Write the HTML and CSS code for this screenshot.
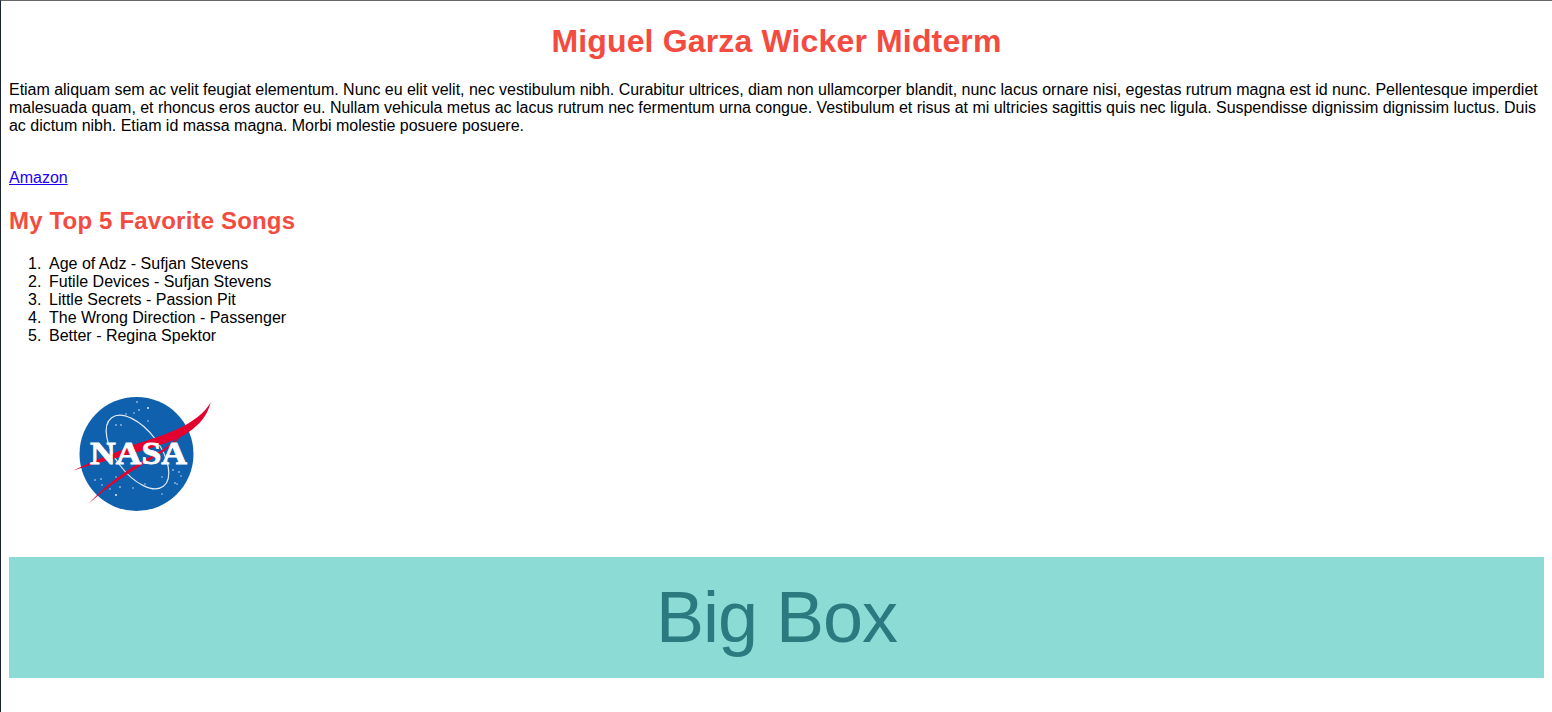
FILE: index.html
```html
<!DOCTYPE html>
<html lang="en">
<head>
    <meta charset="UTF-8">
    <title>Miguel Garza Wicker Midterm</title>
    <link rel="stylesheet" href="styles.css">
</head>
<body>
    <h1 class="title">Miguel Garza Wicker Midterm</h1>
    <p class="intro">Etiam aliquam sem ac velit feugiat elementum. Nunc eu elit velit, nec vestibulum nibh. Curabitur ultrices, diam non ullamcorper blandit, nunc lacus ornare nisi, egestas rutrum magna est id nunc. Pellentesque imperdiet malesuada quam, et rhoncus eros auctor eu. Nullam vehicula metus ac lacus rutrum nec fermentum urna congue. Vestibulum et risus at mi ultricies sagittis quis nec ligula. Suspendisse dignissim dignissim luctus. Duis ac dictum nibh. Etiam id massa magna. Morbi molestie posuere posuere.</p>
    <p class="link-row"><a class="link" href="#">Amazon</a></p>
    <h2 class="subtitle">My Top 5 Favorite Songs</h2>
    <ol class="songs">
        <li>Age of Adz - Sufjan Stevens</li>
        <li>Futile Devices - Sufjan Stevens</li>
        <li>Little Secrets - Passion Pit</li>
        <li>The Wrong Direction - Passenger</li>
        <li>Better - Regina Spektor</li>
    </ol>
    <div class="logo-row">
        <svg class="nasa" width="180" height="140" viewBox="0 0 180 140">
            <circle cx="86.5" cy="74" r="57" fill="#0f60ad"/>
            <ellipse cx="87.5" cy="72" rx="22" ry="43" transform="rotate(-37 87.5 72)" fill="none" stroke="#dfe9f5" stroke-width="1.2"/>
            <g fill="#e4eef8">
                <circle cx="87" cy="22" r="0.8"/><circle cx="89" cy="30" r="0.8"/><circle cx="98" cy="28" r="1"/>
                <circle cx="84" cy="33" r="0.7"/><circle cx="76" cy="34" r="0.7"/><circle cx="98" cy="41" r="0.7"/>
                <circle cx="66" cy="45" r="0.8"/><circle cx="71" cy="45" r="0.8"/><circle cx="45" cy="100" r="0.8"/>
                <circle cx="51" cy="99" r="0.8"/><circle cx="52" cy="105" r="0.7"/><circle cx="66" cy="97" r="0.7"/>
                <circle cx="66" cy="115" r="1"/><circle cx="70" cy="107" r="0.8"/><circle cx="60" cy="109" r="0.7"/>
                <circle cx="83" cy="108" r="0.7"/><circle cx="95" cy="104" r="0.7"/><circle cx="112" cy="114" r="0.7"/>
                <circle cx="123" cy="90" r="0.8"/><circle cx="129" cy="92" r="0.8"/><circle cx="125" cy="103" r="0.8"/>
                <circle cx="131" cy="96" r="0.7"/><circle cx="112" cy="97" r="0.7"/><circle cx="127" cy="104" r="0.7"/>
            </g>
            <path d="M22.7 90.7 C45 80 60 75 83 65 C115 55 147 45 160.7 22.5 C155 45 134 58 110 65 C90 72 60 79 22.7 90.7 Z" fill="#e4032e"/>
            <path d="M38.3 124 C60 100 85 85 105 74 C118 67 128 58 134 52 C125 65 112 73 100 80 C80 92 58 106 38.3 124 Z" fill="#e4032e"/>
            <text class="nasa-word" x="40" y="84" textLength="97" lengthAdjust="spacingAndGlyphs">NASA</text>
        </svg>
    </div>
    <div class="big-box">Big Box</div>
</body>
</html>
```

FILE: styles.css
```css
html {
    min-height: 100vh;
    box-sizing: border-box;
    border-top: 1px solid #666;
    border-left: 1px solid #1c2233;
}
body {
    margin: 0;
    padding: 0 8px;
    font-family: "Liberation Sans", Arial, sans-serif;
    font-size: 16px;
    line-height: 18px;
    color: #000;
    background: #fff;
}
.title {
    margin: 0;
    padding-top: 22px;
    font-size: 32px;
    line-height: 37px;
    letter-spacing: 0.15px;
    text-align: center;
    color: #f44b40;
}
.intro {
    margin: 0;
    padding-top: 21px;
    letter-spacing: -0.025px;
}
.link-row {
    margin: 0;
    padding-top: 34px;
}
.link {
    color: #1f00ee;
}
.subtitle {
    margin: 0;
    padding-top: 20px;
    font-size: 24px;
    line-height: 28px;
    letter-spacing: 0.17px;
    color: #f44b40;
}
.songs {
    margin: 0;
    padding: 20px 0 0 40px;
}
.songs li::marker {
    content: counter(list-item) ".\00a0\2009";
}
.logo-row {
    padding: 35px 0 37px 41px;
}
.nasa {
    display: block;
}
.nasa-word {
    font-family: "Liberation Serif", serif;
    font-size: 32px;
    font-weight: bold;
    fill: #fff;
    stroke: #fff;
    stroke-width: 0.8px;
}
.big-box {
    height: 121px;
    background: #8cdbd5;
    color: #2b7a80;
    font-size: 72px;
    line-height: 121px;
    letter-spacing: -1px;
    text-align: center;
}
```
